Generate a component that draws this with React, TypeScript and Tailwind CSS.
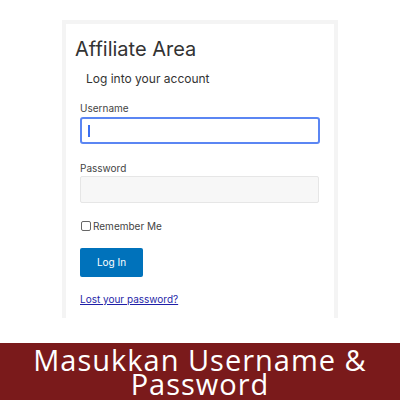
import React from 'react';

export default function App() {
  return (
    <div className="w-[400px] h-[400px] bg-white flex flex-col overflow-hidden" style={{ fontFamily: 'Inter, "Liberation Sans", sans-serif' }}>
      {/* card */}
      <div className="h-[343px] flex justify-center pt-[20px]">
        <div className="w-[276px] h-[298px] border-[4px] border-b-0 border-[#f4f4f4] pl-[14px] pr-[14px]">
          <h1 className="text-[20px] leading-[24px] text-[#333] mt-[13px] ml-[-5px] font-normal">Affiliate Area</h1>
          <p className="text-[12px] text-[#333] mt-[10px] ml-[6px] leading-[16px]">Log into your account</p>

          <label className="block text-[10px] text-[#444] mt-[15px] leading-[12px]">Username</label>
          <div className="mt-[3px] w-[240px] h-[27px] rounded-[3px] border-2 border-[#5b86f3] flex items-center pl-[6px]">
            <div className="w-[2px] h-[12px] bg-[#3b6ff0]" />
          </div>

          <label className="block text-[10px] text-[#444] mt-[18px] leading-[12px]">Password</label>
          <div className="mt-[2px] w-[239px] h-[27px] rounded-[2px] border border-[#e6e6e6] bg-[#f7f7f7]" />

          <div className="flex items-center mt-[17px] gap-[2px]">
            <div className="w-[10px] h-[10px] rounded-[2px] border border-[#666] bg-white ml-[1px]" />
            <span className="text-[10px] text-[#444] leading-[12px]">Remember Me</span>
          </div>

          <button className="mt-[16px] w-[63px] h-[29px] bg-[#0072bb] text-white text-[10px] rounded-[2px] block">Log In</button>

          <a className="block mt-[16px] text-[10px] leading-[12px] text-[#1f1fa8] underline">Lost your password?</a>
        </div>
      </div>

      {/* banner */}
      <div className="flex-1 bg-[#7a1a1b] flex flex-col items-center pt-[5px]">
        <div className="text-white text-center text-[29px] leading-[24px] tracking-[1px] font-medium" style={{ fontFamily: '"Open Sans", sans-serif' }}>
          Masukkan Username &amp;<br />Password
        </div>
      </div>
    </div>
  );
}
